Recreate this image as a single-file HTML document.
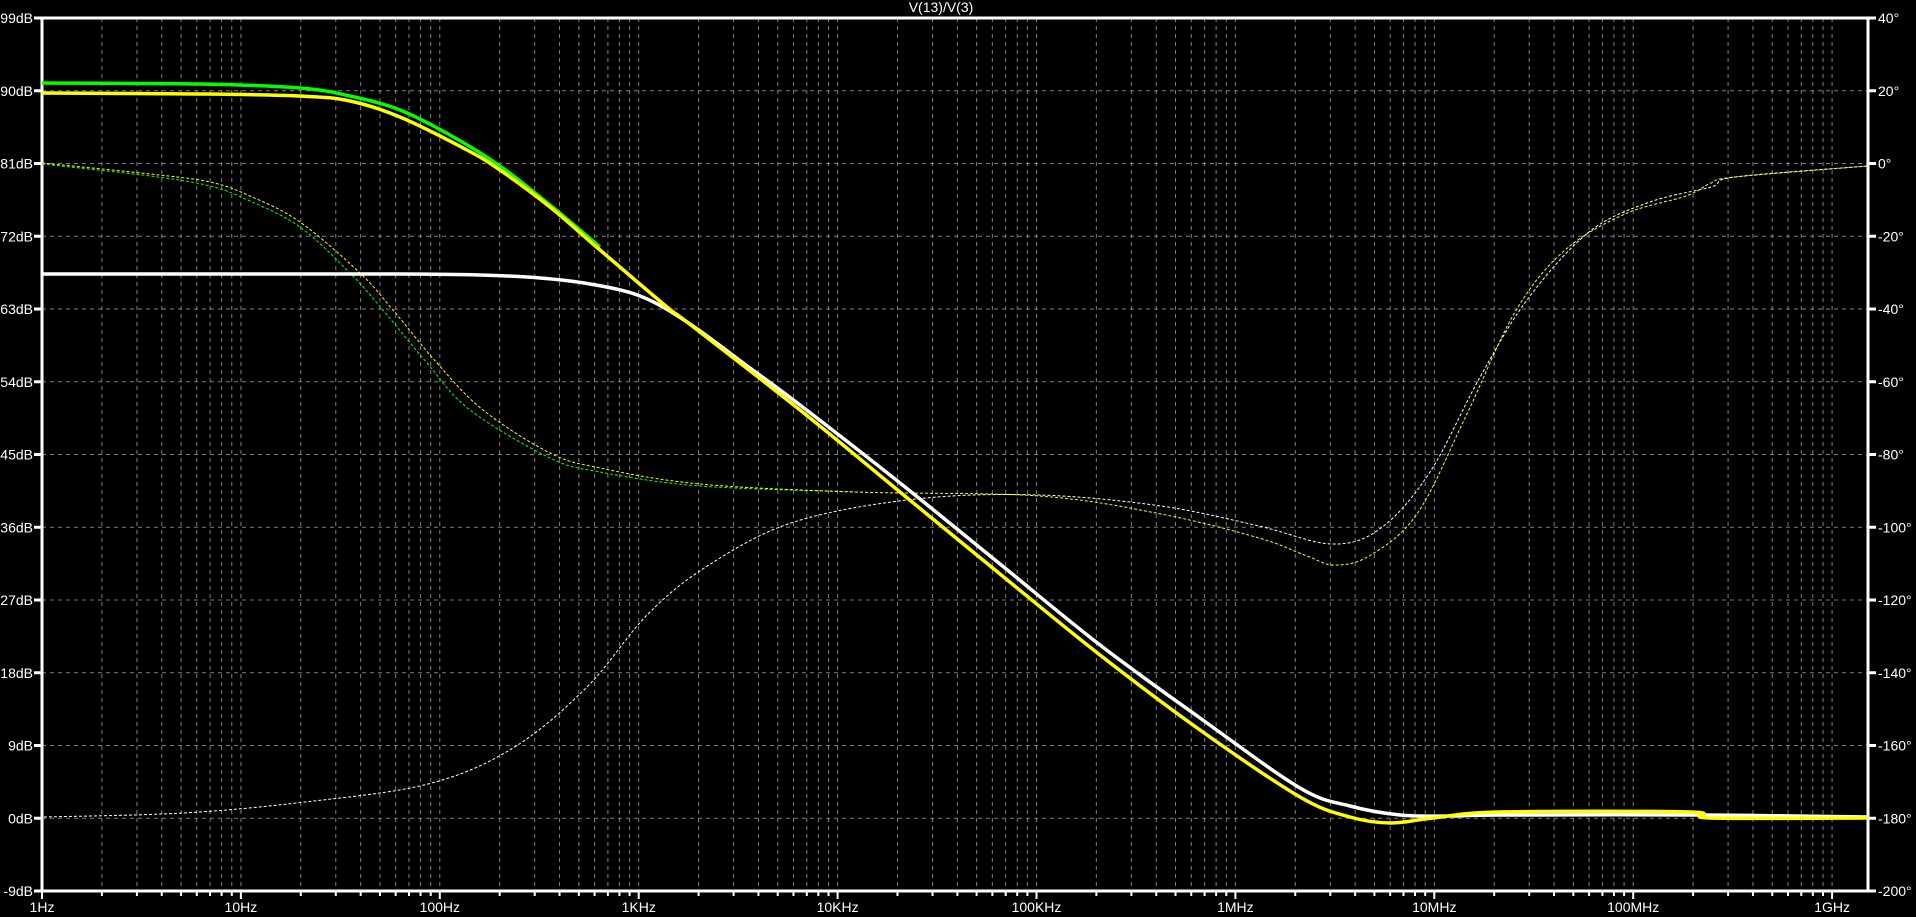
<!DOCTYPE html>
<html><head><meta charset="utf-8"><style>
html,body{margin:0;padding:0;background:#000;width:1916px;height:917px;overflow:hidden}
svg{display:block}
text{font-family:"Liberation Sans",sans-serif;fill:#fff;font-size:14px}
</style></head><body>
<svg width="1916" height="917" viewBox="0 0 1916 917" xmlns="http://www.w3.org/2000/svg">
<g id="grid" stroke="#808080" stroke-width="1" stroke-dasharray="4,4" fill="none"></g>
<g id="axes"></g>
<g id="curves" fill="none" stroke-linejoin="round"></g>
</svg>
<script>
(function(){
var ns="http://www.w3.org/2000/svg",svg=document.querySelector('svg');
var g=document.getElementById('grid'),ax=document.getElementById('axes'),cv=document.getElementById('curves');
function el(t,a,p,txt){var e=document.createElementNS(ns,t);for(var k in a)e.setAttribute(k,a[k]);if(txt!==undefined)e.textContent=txt;(p||svg).appendChild(e);return e;}
var L=42,R=1868,T=18,B=891,dec=198.9;
for(var i=1;i<12;i++){var y=T+i*72.75;el('line',{x1:L,x2:R,y1:y,y2:y},g);}
for(var d=0;d<10;d++){for(var m=1;m<10;m++){var x=L+dec*(d+Math.log10(m));if(x<=L+1||x>=R)continue;el('line',{x1:x,x2:x,y1:T,y2:B},g);}}
el('rect',{x:L,y:T,width:R-L,height:B-T,stroke:'#fff','stroke-width':3,fill:'none'},ax);
var db=['99dB','90dB','81dB','72dB','63dB','54dB','45dB','36dB','27dB','18dB','9dB','0dB','-9dB'];
var ph=['40°','20°','0°','-20°','-40°','-60°','-80°','-100°','-120°','-140°','-160°','-180°','-200°'];
for(var i=0;i<13;i++){var y=T+i*72.75;
el('line',{x1:L-8,x2:L,y1:y,y2:y,stroke:'#fff','stroke-width':3},ax);
el('line',{x1:R,x2:R+8,y1:y,y2:y,stroke:'#fff','stroke-width':3},ax);
el('text',{x:33,y:y+5,'text-anchor':'end'},ax,db[i]);
el('text',{x:1878,y:y+5},ax,ph[i]);}
var fl=['1Hz','10Hz','100Hz','1KHz','10KHz','100KHz','1MHz','10MHz','100MHz','1GHz'];
for(var d=0;d<10;d++){for(var m=1;m<10;m++){var x=L+dec*(d+Math.log10(m));if(x>R)continue;
el('line',{x1:x,x2:x,y1:B,y2:B+(m==1?8:5),stroke:'#fff','stroke-width':2},ax);}
el('text',{x:L+dec*d,y:912,'text-anchor':'middle'},ax,fl[d]);}
el('text',{x:941,y:12,'text-anchor':'middle','font-size':'12'},ax,'V(13)/V(3)');

function cr(p){var s='M'+p[0][0]+','+p[0][1];
for(var i=0;i<p.length-1;i++){var p0=p[i-1]||p[i],p1=p[i],p2=p[i+1],p3=p[i+2]||p2;
s+=' C'+(p1[0]+(p2[0]-p0[0])/6)+','+(p1[1]+(p2[1]-p0[1])/6)+' '+(p2[0]-(p3[0]-p1[0])/6)+','+(p2[1]-(p3[1]-p1[1])/6)+' '+p2[0]+','+p2[1];}
return s;}
function curve(pts,col,w,dash){var a={d:cr(pts),stroke:col,'stroke-width':w};if(dash)a['stroke-dasharray']=dash;el('path',a,cv);}
var yr=[[855,492],[1039,496],[1161,514],[1259,538],[1307,556],[1334,565],[1369,556],[1417,514],[1466,416],[1515,312],[1564,251],[1625,214],[1686,196],[1711,183],[1735,177],[1868,166]];
var gp=[[42,164],[150,176],[210,186],[250,201],[300,227],[350,273],[383,310],[427,363],[470,410],[550,458],[600,472],[700,486],[855,492]];
var yp=[[42,163],[150,174],[210,182],[250,196],[300,222],[360,273],[393,310],[437,363],[483,410],[550,453],[600,468],[700,484]].concat(yr);
var wp=[[44,817],[183,813],[305,802],[428,784],[513,748],[587,687],[648,614],[709,565],[794,522],[916,499],[1039,495],[1161,506],[1259,526],[1332,544],[1381,528],[1430,472],[1479,379],[1527,300],[1589,232],[1650,202],[1711,187],[1735,177],[1868,166]];
curve(gp,'#00ff00',1,'3,2');
curve(wp,'#ffffff',1,'3,2');
curve(yp,'#ffff00',1,'3,2');
curve([[42,83],[200,84],[300,88],[350,96],[400,110],[450,135],[500,166],[550,205],[600,247]],'#00ff00',3.5);
curve([[42,274],[200,274],[400,274],[480,275],[540,278],[590,284],[640,296],[687,322],[750,368],[800,405],[900,483],[1000,564],[1100,645],[1200,718],[1300,788],[1350,806],[1400,815],[1450,816],[1500,815],[1700,815],[1868,817]],'#ffffff',3.5);
curve([[42,93],[200,94],[300,96],[350,101],[400,117],[467,150],[500,170],[550,207],[600,250],[667,307],[687,322],[800,410],[900,492],[1000,574],[1100,655],[1200,730],[1300,797],[1350,817],[1390,823],[1433,818],[1500,812],[1690,812],[1710,818],[1868,818]],'#ffff00',3.5);
})();
</script>
</body></html>
